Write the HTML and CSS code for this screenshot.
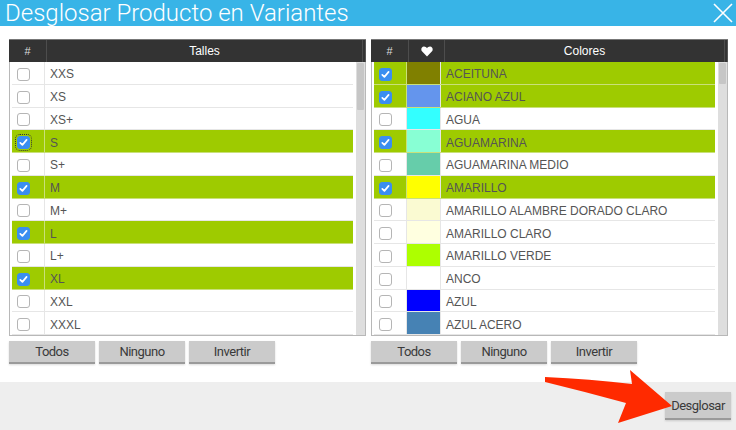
FILE: index.html
```html
<!DOCTYPE html>
<html lang="es">
<head>
    <meta charset="UTF-8">
    <meta name="viewport" content="width=device-width, initial-scale=1.0">
    <title>Desglosar Producto en Variantes</title>
    <link rel="stylesheet" href="styles.css">
</head>
<body>
    <div class="dialog">
        <div class="titlebar">
            <span class="title">Desglosar Producto en Variantes</span>
            <svg class="close" width="20" height="20" viewBox="0 0 20 20">
                <path d="M1 1 L19 19 M19 1 L1 19" stroke="#fff" stroke-width="1.6" fill="none"/>
            </svg>
        </div>

        <div class="content">
            <!-- Talles -->
            <div class="panel">
                <div class="grid-head">
                    <div class="hcell col-check">#</div>
                    <div class="hcell col-name">Talles</div>
                    <div class="hcell col-scroll"></div>
                </div>
                <div class="list">
                    <div class="rows">
                        <div class="row"><span class="cell col-check"><input type="checkbox"></span><span class="cell name">XXS</span></div>
                        <div class="row"><span class="cell col-check"><input type="checkbox"></span><span class="cell name">XS</span></div>
                        <div class="row"><span class="cell col-check"><input type="checkbox"></span><span class="cell name">XS+</span></div>
                        <div class="row selected"><span class="cell col-check"><input type="checkbox" class="focused" checked></span><span class="cell name">S</span></div>
                        <div class="row"><span class="cell col-check"><input type="checkbox"></span><span class="cell name">S+</span></div>
                        <div class="row selected"><span class="cell col-check"><input type="checkbox" checked></span><span class="cell name">M</span></div>
                        <div class="row"><span class="cell col-check"><input type="checkbox"></span><span class="cell name">M+</span></div>
                        <div class="row selected"><span class="cell col-check"><input type="checkbox" checked></span><span class="cell name">L</span></div>
                        <div class="row"><span class="cell col-check"><input type="checkbox"></span><span class="cell name">L+</span></div>
                        <div class="row selected"><span class="cell col-check"><input type="checkbox" checked></span><span class="cell name">XL</span></div>
                        <div class="row"><span class="cell col-check"><input type="checkbox"></span><span class="cell name">XXL</span></div>
                        <div class="row"><span class="cell col-check"><input type="checkbox"></span><span class="cell name">XXXL</span></div>
                    </div>
                    <div class="scrollbar"><div class="thumb thumb-talles"></div></div>
                </div>
                <div class="actions">
                    <button class="btn">Todos</button>
                    <button class="btn">Ninguno</button>
                    <button class="btn">Invertir</button>
                </div>
            </div>

            <!-- Colores -->
            <div class="panel">
                <div class="grid-head">
                    <div class="hcell col-check">#</div>
                    <div class="hcell col-swatch">
                        <svg width="12" height="11" viewBox="0 0 12 11">
                            <path d="M6 10.5 L1.2 5.6 C-0.4 4 0.2 0.6 3 0.5 C4.4 0.5 5.4 1.3 6 2.3 C6.6 1.3 7.6 0.5 9 0.5 C11.8 0.6 12.4 4 10.8 5.6 Z" fill="#fff"/>
                        </svg>
                    </div>
                    <div class="hcell col-name">Colores</div>
                    <div class="hcell col-scroll"></div>
                </div>
                <div class="list">
                    <div class="rows">
                        <div class="row selected"><span class="cell col-check"><input type="checkbox" checked></span><span class="cell swatch" style="background:#808000"></span><span class="cell name">ACEITUNA</span></div>
                        <div class="row selected"><span class="cell col-check"><input type="checkbox" checked></span><span class="cell swatch" style="background:#6495ed"></span><span class="cell name">ACIANO AZUL</span></div>
                        <div class="row"><span class="cell col-check"><input type="checkbox"></span><span class="cell swatch" style="background:#33ffff"></span><span class="cell name">AGUA</span></div>
                        <div class="row selected"><span class="cell col-check"><input type="checkbox" checked></span><span class="cell swatch" style="background:#88ffd4"></span><span class="cell name">AGUAMARINA</span></div>
                        <div class="row"><span class="cell col-check"><input type="checkbox"></span><span class="cell swatch" style="background:#66cdaa"></span><span class="cell name">AGUAMARINA MEDIO</span></div>
                        <div class="row selected"><span class="cell col-check"><input type="checkbox" checked></span><span class="cell swatch" style="background:#ffff00"></span><span class="cell name">AMARILLO</span></div>
                        <div class="row"><span class="cell col-check"><input type="checkbox"></span><span class="cell swatch" style="background:#fafad2"></span><span class="cell name">AMARILLO ALAMBRE DORADO CLARO</span></div>
                        <div class="row"><span class="cell col-check"><input type="checkbox"></span><span class="cell swatch" style="background:#ffffe0"></span><span class="cell name">AMARILLO CLARO</span></div>
                        <div class="row"><span class="cell col-check"><input type="checkbox"></span><span class="cell swatch" style="background:#adff00"></span><span class="cell name">AMARILLO VERDE</span></div>
                        <div class="row"><span class="cell col-check"><input type="checkbox"></span><span class="cell swatch" style="background:#ffffff"></span><span class="cell name">ANCO</span></div>
                        <div class="row"><span class="cell col-check"><input type="checkbox"></span><span class="cell swatch" style="background:#0000ff"></span><span class="cell name">AZUL</span></div>
                        <div class="row"><span class="cell col-check"><input type="checkbox"></span><span class="cell swatch" style="background:#4682b4"></span><span class="cell name">AZUL ACERO</span></div>
                    </div>
                    <div class="scrollbar"><div class="thumb thumb-colores"></div></div>
                </div>
                <div class="actions">
                    <button class="btn">Todos</button>
                    <button class="btn">Ninguno</button>
                    <button class="btn">Invertir</button>
                </div>
            </div>
        </div>

        <div class="footer">
            <button class="btn btn-main">Desglosar</button>
        </div>

        <!-- flecha de anotación -->
        <svg class="arrow" width="134" height="60" viewBox="0 0 134 60">
            <path d="M3 9 Q48 11 90 16 L88 2 L130 38 L76 55 L84 35 Q44 24 3 14 Z" fill="#ff2a00"/>
        </svg>
    </div>
</body>
</html>
```

FILE: styles.css
```css
* {
    margin: 0;
    padding: 0;
    box-sizing: border-box;
}

body {
    background: #fff;
    font-family: 'Liberation Sans', Arial, sans-serif;
}

.dialog {
    position: relative;
    width: 736px;
    height: 430px;
    display: flex;
    flex-direction: column;
    overflow: hidden;
}

.titlebar {
    height: 26px;
    background: #38b4e7;
    display: flex;
    align-items: center;
    justify-content: space-between;
    padding: 0 3px 0 5px;
}

.title {
    color: #fff;
    font-family: 'Roboto', sans-serif;
    font-weight: 300;
    font-size: 24px;
    line-height: 24px;
    white-space: nowrap;
}

.close {
    display: block;
}

.content {
    flex: 1;
    display: flex;
    gap: 5px;
    padding: 13px 8px 0 9px;
}

.panel {
    width: 357px;
    display: flex;
    flex-direction: column;
}

.grid-head {
    height: 23px;
    background: #333;
    border-top: 1px solid #777;
    display: flex;
    color: #fff;
    font-size: 12px;
}

.hcell {
    display: flex;
    align-items: center;
    justify-content: center;
    border-right: 1px solid #4d4d4d;
}

.hcell.col-check {
    width: 38px;
    font-size: 11px;
    color: #ddd;
}

.hcell.col-swatch {
    width: 36px;
}

.hcell.col-name {
    flex: 1;
}

.hcell.col-scroll {
    width: 3px;
    border-right: 1px solid #555;
}

.list {
    height: 274px;
    border: 1px solid #b8b8b8;
    border-top: none;
    padding: 0 0 0 2px;
    display: flex;
    overflow: hidden;
}

.rows {
    flex: 1;
    margin-right: 3px;
}

.row {
    height: 22.75px;
    display: flex;
    padding-top: 3px;
    border-bottom: 1px solid #e6e6e6;
    color: #555;
    font-size: 12px;
}

.row.selected {
    background: #9ecb00;
    border-bottom-color: #c9e07a;
}

.cell {
    display: flex;
    align-items: center;
}

.cell.col-check {
    width: 33px;
    padding-left: 5px;
    margin-top: -3px;
    padding-top: 3px;
    border-right: 1px solid #e6e6e6;
}

.row.selected .cell.col-check {
    border-right-color: #c9e07a;
}

.cell.swatch {
    width: 34px;
    margin-top: -3px;
    border-right: 1px solid #e6e6e6;
}

.cell.name {
    flex: 1;
    padding-left: 5px;
    white-space: nowrap;
}

input[type="checkbox"] {
    appearance: none;
    -webkit-appearance: none;
    width: 13px;
    height: 13px;
    border: 1px solid #b5b5b5;
    border-radius: 3px;
    background: #fff;
    display: block;
}

input[type="checkbox"]:checked {
    border-color: #3a8ef0;
    background: #3a8ef0 url("data:image/svg+xml;utf8,<svg xmlns='http://www.w3.org/2000/svg' width='13' height='13' viewBox='0 0 13 13'><path d='M3.3 6.8 L5.4 8.9 L9.6 3.9' stroke='white' stroke-width='1.7' fill='none' stroke-linecap='round' stroke-linejoin='round'/></svg>") center / 13px 13px no-repeat;
}

input.focused {
    outline: 1px dotted #333;
    outline-offset: 1px;
}

.scrollbar {
    width: 9px;
    background: #dedede;
}

.thumb {
    background: #c6c6c6;
    margin: 1px 1px 0;
    border-radius: 1px;
}

.thumb-talles { height: 47px; }
.thumb-colores { height: 21px; }

.actions {
    display: flex;
    gap: 4px;
    margin-top: 5px;
}

.btn {
    width: 86px;
    height: 23px;
    border: none;
    border-bottom: 2px solid #9a9a9a;
    background: #cbcbcb;
    box-shadow: 0 1px 2px rgba(0,0,0,0.15);
    font-family: 'Roboto', sans-serif;
    font-size: 13px;
    letter-spacing: -0.5px;
    color: #3a3a3a;
}

.footer {
    height: 48px;
    background: #eee;
    display: flex;
    justify-content: flex-end;
    align-items: flex-start;
    padding: 10px 5px 0 0;
}

.btn-main {
    width: 66px;
    height: 28px;
}

.arrow {
    position: absolute;
    left: 542px;
    top: 368px;
}
```
